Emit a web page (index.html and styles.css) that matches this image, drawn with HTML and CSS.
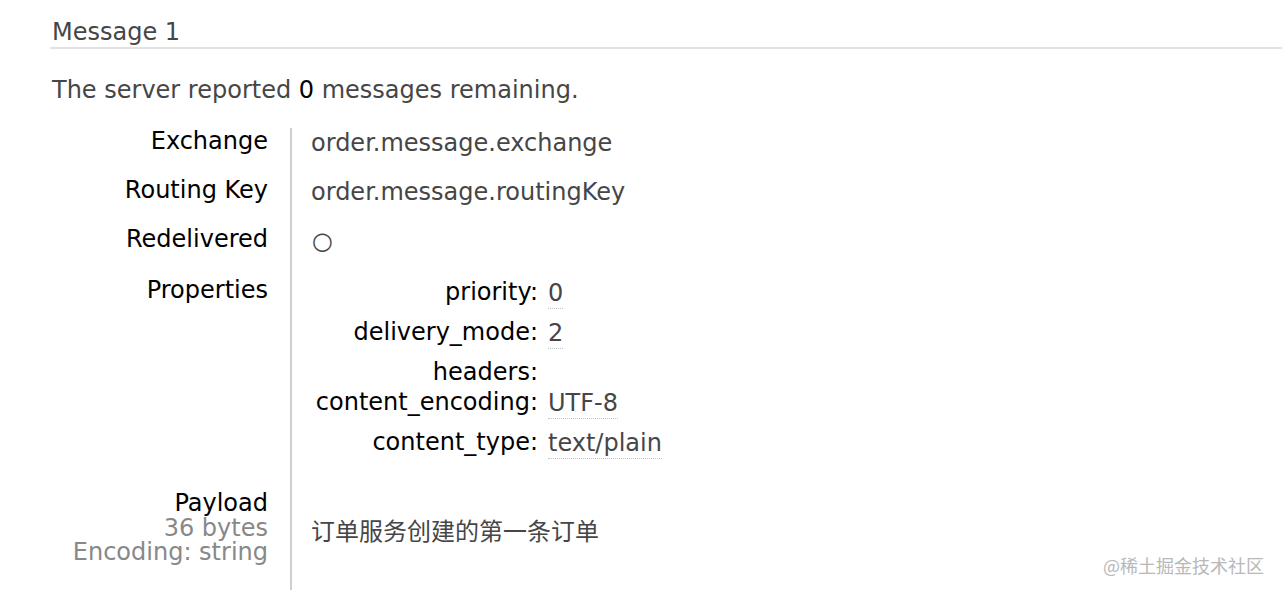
FILE: index.html
```html
<!DOCTYPE html>
<html>
<head>
<meta charset="utf-8">
<link rel="stylesheet" href="styles.css">
</head>
<body>
<div class="page">
  <h3 class="msg-title">Message 1</h3>
  <p class="remaining">The server reported <span class="num">0</span> messages remaining.</p>
  <table class="facts">
    <tr>
      <th>Exchange</th>
      <td>order.message.exchange</td>
    </tr>
    <tr>
      <th>Routing Key</th>
      <td>order.message.routingKey</td>
    </tr>
    <tr>
      <th>Redelivered</th>
      <td><span class="circle">○</span></td>
    </tr>
    <tr class="props-row">
      <th>Properties</th>
      <td>
        <table class="props">
          <tr><th>priority:</th><td><abbr>0</abbr></td></tr>
          <tr><th>delivery_mode:</th><td><abbr>2</abbr></td></tr>
          <tr class="empty"><th>headers:</th><td></td></tr>
          <tr><th>content_encoding:</th><td><abbr>UTF-8</abbr></td></tr>
          <tr><th>content_type:</th><td><abbr>text/plain</abbr></td></tr>
        </table>
      </td>
    </tr>
    <tr class="payload-row">
      <th><span class="pl-line">Payload</span><span class="pl-line sub">36 bytes</span><span class="pl-line sub">Encoding: string</span></th>
      <td><span class="payload">订单服务创建的第一条订单</span></td>
    </tr>
  </table>
</div>
<div class="watermark">@稀土掘金技术社区</div>
</body>
</html>
```

FILE: styles.css
```css
html, body {
  margin: 0;
  padding: 0;
  background: #fff;
}
body {
  font-family: "DejaVu Sans", Verdana, sans-serif;
  font-size: 24px;
  color: #464646;
  width: 1282px;
  height: 594px;
  overflow: hidden;
  position: relative;
}
.page {
  padding-left: 50px;
}
.msg-title {
  margin: 0;
  padding: 19px 0 2px 2px;
  font-weight: normal;
  font-size: 24px;
  color: #464646;
  border-bottom: 2px solid #e2e2e2;
  line-height: 26px;
}
.remaining {
  margin: 28px 0 0 2px;
  line-height: 26px;
}
.remaining .num {
  color: #000;
}
.facts {
  border-collapse: collapse;
  margin-top: 25px;
}
.facts > tbody > tr > th {
  text-align: right;
  font-weight: normal;
  color: #000;
  vertical-align: top;
  padding: 0 22px 23px 0;
  width: 218px;
  border-right: 2px solid #cfcfcf;
  line-height: 26px;
}
.facts > tbody > tr > td {
  vertical-align: top;
  padding: 2px 0 21px 19px;
  line-height: 26px;
}
.circle {
  font-size: 24px;
  padding-left: 1px;
}
.facts > tbody > tr.props-row > th {
  padding-top: 2px;
  padding-bottom: 0;
}
.facts > tbody > tr.props-row > td {
  padding-top: 4px;
  padding-bottom: 10px;
}
.props {
  border-collapse: collapse;
}
.props th {
  text-align: right;
  font-weight: normal;
  color: #000;
  padding: 0 10px 0 0;
  width: 227px;
  line-height: 26px;
  vertical-align: top;
}
.props td {
  padding: 1px 0 13px 0;
  line-height: 26px;
  vertical-align: top;
}
.props tr.empty th { padding-bottom: 4px; }
.props tr.empty td { padding: 0; }
.props abbr {
  text-decoration: none;
  border-bottom: 1px dotted #c4c4c4;
  padding-bottom: 1px;
}
.facts > tbody > tr.payload-row > th {
  padding-top: 12px;
  padding-bottom: 25px;
  line-height: 24.5px;
}
.pl-line {
  display: block;
  height: 24.5px;
}
.facts > tbody > tr.payload-row > td {
  padding-top: 40px;
}
.sub {
  color: #888;
}
.payload {
  font-family: "DejaVu Sans", "Noto Sans CJK SC", sans-serif;
  font-size: 24px;
  color: #464646;
}
.watermark {
  position: absolute;
  left: 1103px;
  top: 553px;
  font-family: "Noto Sans CJK SC", sans-serif;
  font-size: 18px;
  color: #b8b8b8;
  line-height: 24px;
}
```
